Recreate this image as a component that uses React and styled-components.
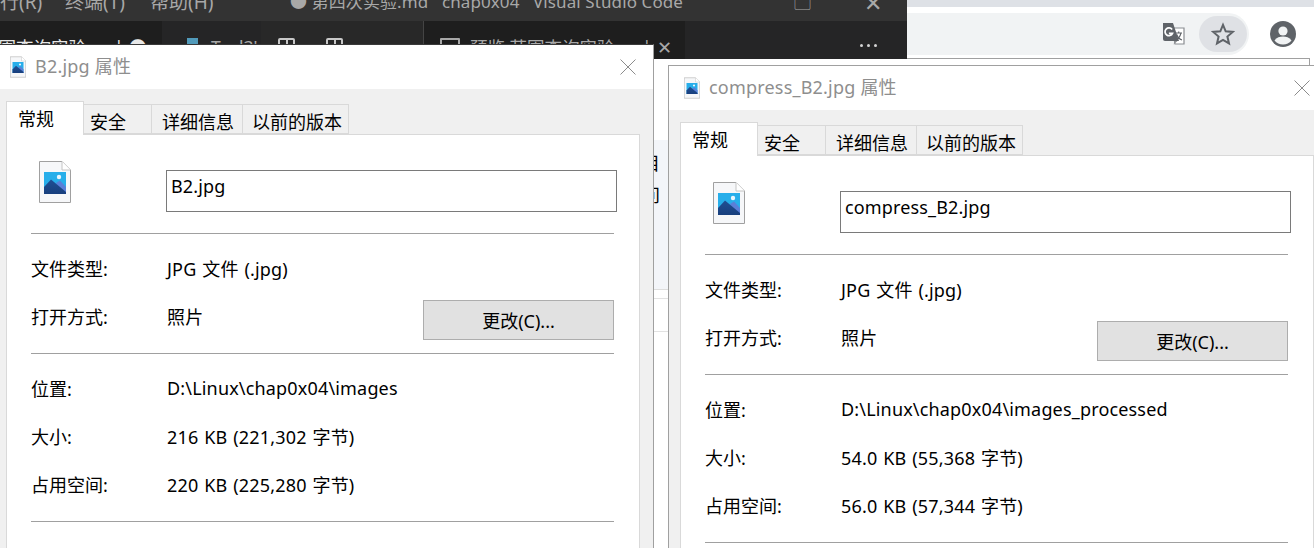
import React from 'react'
import styled, { createGlobalStyle } from 'styled-components'

const FONT = `"Noto Sans", "Noto Sans CJK SC", sans-serif`

const GlobalStyle = createGlobalStyle`
  html, body { margin: 0; padding: 0; background: #fff; }
  * { box-sizing: border-box; }
`

const Desktop = styled.div`
  position: relative;
  width: 1314px;
  height: 548px;
  overflow: hidden;
  font-family: ${FONT};
  font-size: 18px;
  color: #000;
`

/* browser behind everything */
const Browser = styled.div`
  display: flex;
  flex-direction: column;
  height: 100%;
`
const BrowserTabs = styled.div`
  height: 7px;
  background: #dee1e6;
`
const BrowserBar = styled.div`
  height: 51px;
  padding: 6px 18px 3px 0;
  display: flex;
  align-items: center;
  justify-content: space-between;
  background: #fff;
`
const Omnibox = styled.div`
  width: 1249px;
  height: 42px;
  padding-right: 2px;
  display: flex;
  align-items: center;
  justify-content: flex-end;
  gap: 13px;
  background: #f1f3f4;
  border-radius: 0 21px 21px 0;
`
const StarButton = styled.div`
  width: 48px;
  height: 36px;
  display: flex;
  align-items: center;
  justify-content: center;
  background: #dfe1e5;
  border-radius: 18px;
`
const BrowserPage = styled.div`
  flex: 1;
  padding-left: 654px;
  background: #fff;
`
const PageFrame = styled.div`
  margin-right: 4px;
  height: 100%;
  border-top: 1px solid #a0a0a0;
  border-right: 1px solid #a0a0a0;
  padding-top: 81px;
`
const Strip = styled.div`
  height: 150px;
  padding-top: 7px;
  background: #f3f5f9;
  border-bottom: 1px solid #dddddd;
`
const Clipped = styled.div`
  width: 6px;
  height: 32px;
  line-height: 32px;
  display: flex;
  justify-content: flex-end;
  overflow: hidden;
  white-space: nowrap;
`
const PageRule = styled.div`
  height: ${p => p.$h}px;
  border-bottom: 1px solid #e2e2e2;
`

/* vs code window */
const Code = styled.div`
  position: absolute;
  left: 0;
  top: 0;
  width: 907px;
  height: 59px;
  overflow: hidden;
  display: flex;
  flex-direction: column;
  color: #a8a8a8;
`
const CodeTitle = styled.div`
  height: 21px;
  flex: none;
  overflow: hidden;
  display: flex;
  background: #333333;
`
const TitleRun = styled.div`
  flex: none;
  width: ${p => p.$w}px;
  height: 24px;
  margin-top: -10px;
  line-height: 24px;
  font-size: ${p => p.$size || 17}px;
  letter-spacing: ${p => p.$track || 0}px;
  white-space: pre;
`
const CodeTabs = styled.div`
  flex: 1;
  display: flex;
  background: #252526;
`
const CodeTab = styled.div`
  flex: none;
  width: ${p => p.$w}px;
  padding: 14px 0 0 ${p => p.$pad || 0}px;
  display: flex;
  align-items: flex-start;
  gap: ${p => p.$gap || 0}px;
  background: ${p => p.$bg};
  border-left: ${p => (p.$line ? '1px solid #444' : 'none')};
  font-size: 17.5px;
  line-height: 24px;
  color: ${p => p.$color || '#a8a8a8'};
  white-space: nowrap;
  overflow: hidden;
`
const TabCaption = styled.span`
  flex: none;
  margin-left: ${p => p.$shift || 0}px;
  width: ${p => (p.$w ? `${p.$w}px` : 'auto')};
`
const SplitIcon = styled.div`
  flex: none;
  width: 17px;
  height: 18px;
  margin-top: 3px;
  border: 2px solid #c8c8c8;
  border-radius: 2px;
  background: linear-gradient(#c8c8c8, #c8c8c8) center / 2px 100% no-repeat;
`
const PreviewIcon = styled.div`
  flex: none;
  width: 20px;
  height: 20px;
  margin-top: 3px;
  border: 2px solid #a8a8a8;
  border-radius: 1px;
  background: linear-gradient(#a8a8a8, #a8a8a8) center 5px / 100% 2px no-repeat;
`
const Dots = styled.div`
  margin-left: auto;
  margin-right: 30px;
  margin-top: 23px;
  display: flex;
  gap: 4px;
`
const Dot = styled.i`
  width: 3px;
  height: 3px;
  border-radius: 50%;
  background: #d4d4d4;
`

/* property dialogs */
const Dialog = styled.div`
  position: absolute;
  left: ${p => p.$left}px;
  top: ${p => p.$top}px;
  width: 660px;
  height: 560px;
  display: flex;
  flex-direction: column;
  background: #f0f0f0;
  border: 1px solid #a0a0a0;
  border-top-color: ${p => p.$topLine};
  border-bottom: none;
`
const TitleBar = styled.div`
  height: 44px;
  flex: none;
  display: flex;
  align-items: center;
  padding: 0 17px 0 15px;
  gap: 9px;
  background: #fff;
  color: #8e8e8e;
`
const TitleText = styled.div`
  flex: 1;
  white-space: nowrap;
  margin-top: -4px;
  letter-spacing: 0.2px;
`
const Tabs = styled.div`
  height: 45px;
  flex: none;
  margin-left: 11px;
  padding-top: 12px;
  display: flex;
  align-items: flex-end;
`
const Tab = styled.div`
  width: ${p => p.$w}px;
  height: ${p => (p.$active ? 34 : 30)}px;
  margin-bottom: ${p => (p.$active ? -1 : 0)}px;
  padding-left: ${p => p.$pad}px;
  line-height: 34px;
  background: ${p => (p.$active ? '#fff' : '#f0f0f0')};
  border: 1px solid #d9d9d9;
  border-left-width: ${p => (p.$active ? 1 : 0)}px;
  border-bottom: ${p => (p.$active ? 'none' : '1px solid #d9d9d9')};
  position: relative;
  white-space: nowrap;
`
const Panel = styled.div`
  flex: 1;
  margin: 0 13px 0 11px;
  padding: 0 20px 0 24px;
  background: #fff;
  border: 1px solid #d9d9d9;
`
const NameRow = styled.div`
  height: 98px;
  padding-top: 35px;
  display: flex;
  align-items: flex-start;
`
const BigIcon = styled.div`
  width: 135px;
  flex: none;
  margin-top: -9px;
  padding-left: 8px;
`
const NameField = styled.div`
  width: 451px;
  flex: none;
  height: 42px;
  padding: 2px 4px;
  line-height: 26px;
  letter-spacing: 0.15px;
  border: 1px solid #7a7a7a;
  background: #fff;
`
const Rule = styled.div`
  height: 1px;
  width: 583px;
  background: #a0a0a0;
`
const Group = styled.div`
  width: 583px;
  padding: 11px 0 12px;
`
const Row = styled.div`
  height: 48px;
  padding-bottom: 2px;
  display: flex;
  align-items: center;
  white-space: nowrap;
`
const Label = styled.div`
  width: 136px;
  flex: none;
`
const Value = styled.div`
  flex: 1;
  letter-spacing: 0.17px;
  word-spacing: 1px;
`
const ChangeButton = styled.div`
  width: 191px;
  height: 40px;
  flex: none;
  margin-top: 8px;
  display: flex;
  align-items: center;
  justify-content: center;
  background: #e1e1e1;
  border: 1px solid #adadad;
`

function FileIcon({ w, h, id }) {
  return (
    <svg width={w} height={h} viewBox="0 0 32 42" style={{ display: 'block', flex: 'none' }}>
      <defs>
        <linearGradient id={id} x1="0" y1="0" x2="0" y2="1">
          <stop offset="0" stopColor="#1f4f94" />
          <stop offset="1" stopColor="#183f7d" />
        </linearGradient>
      </defs>
      <path d="M0.5 0.5H23L31.5 9V41.5H0.5Z" fill="#f6f7f9" stroke="#a0a0a0" />
      <path d="M23 0.5V9H31.5" fill="#fff" stroke="#c4c4c4" />
      <rect x="5" y="11" width="22" height="22" fill="#27aeea" />
      <circle cx="20" cy="16" r="2.2" fill="#e9f6fd" />
      <path d="M17 22L21 19.5L27 26V33H22Z" fill="#5a7fd8" />
      <path d="M5 26L12 18.5L27 31V33H5Z" fill={`url(#${id})`} />
    </svg>
  )
}

const CloseGlyph = () => (
  <svg width="16" height="16" viewBox="0 0 16 16" style={{ flex: 'none' }}>
    <path d="M0.5 0.5L15.5 15.5M15.5 0.5L0.5 15.5" stroke="#8c8c8c" strokeWidth="1" fill="none" />
  </svg>
)

const TABS = [
  { label: '常规', w: 78, pad: 11, active: true },
  { label: '安全', w: 68, pad: 6 },
  { label: '详细信息', w: 91, pad: 10 },
  { label: '以前的版本', w: 106, pad: 9 },
]

function PropertyDialog({ left, top, topLine, iconId, name, path, size, disk }) {
  return (
    <Dialog $left={left} $top={top} $topLine={topLine}>
      <TitleBar>
        <FileIcon w={16} h={22} id={iconId + 's'} />
        <TitleText>{name} 属性</TitleText>
        <CloseGlyph />
      </TitleBar>
      <Tabs>
        {TABS.map(t => (
          <Tab key={t.label} $w={t.w} $pad={t.pad} $active={t.active}>{t.label}</Tab>
        ))}
      </Tabs>
      <Panel>
        <NameRow>
          <BigIcon><FileIcon w={32} h={42} id={iconId} /></BigIcon>
          <NameField>{name}</NameField>
        </NameRow>
        <Rule />
        <Group>
          <Row><Label>文件类型:</Label><Value>JPG 文件 (.jpg)</Value></Row>
          <Row>
            <Label>打开方式:</Label>
            <Value>照片</Value>
            <ChangeButton>更改(C)...</ChangeButton>
          </Row>
        </Group>
        <Rule />
        <Group>
          <Row><Label>位置:</Label><Value>{path}</Value></Row>
          <Row><Label>大小:</Label><Value>{size}</Value></Row>
          <Row><Label>占用空间:</Label><Value>{disk}</Value></Row>
        </Group>
        <Rule />
      </Panel>
    </Dialog>
  )
}

export default function App() {
  return (
    <Desktop>
      <GlobalStyle />
      <Browser>
        <BrowserTabs />
        <BrowserBar>
          <Omnibox>
            <svg width="24" height="24" viewBox="0 0 24 24">
              <path d="M10 6H22V22H13Z" fill="#fff" stroke="#8a8d91" strokeWidth="1.2" />
              <path d="M1 1H11L17 19H3A2 2 0 0 1 1 17Z" fill="#5f6368" />
              <path d="M13 19L11.5 22.5L15.5 19Z" fill="#8a8d91" />
              <path d="M12.6 8.5A3.9 3.9 0 1 0 13 12.4H9.4" fill="none" stroke="#fff" strokeWidth="1.7" transform="translate(-2.5 -1)" />
              <path d="M13.5 11H20M16.7 9.5V11M19 11C18 15 15.5 17.5 13.5 18.5M14.8 12.5C15.5 15 17.5 17.2 20 18" fill="none" stroke="#5f6368" strokeWidth="1.1" />
            </svg>
            <StarButton>
              <svg width="24" height="24" viewBox="0 0 24 24">
                <path d="M12 2.8L14.7 9.3L21.8 9.9L16.4 14.5L18 21.4L12 17.8L6 21.4L7.6 14.5L2.2 9.9L9.3 9.3Z" fill="none" stroke="#5f6368" strokeWidth="2" strokeLinejoin="miter" />
              </svg>
            </StarButton>
          </Omnibox>
          <svg width="26" height="26" viewBox="0 0 26 26">
            <circle cx="13" cy="13" r="13" fill="#5f6368" />
            <circle cx="13" cy="10" r="4.6" fill="#f1f3f4" />
            <path d="M4.5 19.5C6.5 16.4 10 15.6 13 15.6S19.5 16.4 21.5 19.5A11 11 0 0 1 13 23.6A11 11 0 0 1 4.5 19.5Z" fill="#f1f3f4" />
          </svg>
        </BrowserBar>
        <BrowserPage>
          <PageFrame>
            <Strip>
              <Clipped>项目</Clipped>
              <Clipped>问</Clipped>
            </Strip>
            <PageRule $h={9} />
            <PageRule $h={33} />
          </PageFrame>
        </BrowserPage>
      </Browser>

      <Code>
        <CodeTitle>
          <TitleRun $w={65} $size={19}>行(R)</TitleRun>
          <TitleRun $w={85} $size={19}>终端(T)</TitleRun>
          <TitleRun $w={140} $size={19}>帮助(H)</TitleRun>
          <TitleRun $w={504} $track={0.1}>● 第四次实验.md   chap0x04   Visual Studio Code</TitleRun>
          <TitleRun $w={70}>▢</TitleRun>
          <TitleRun $w={41} $size={22}>✕</TitleRun>
        </CodeTitle>
        <CodeTabs>
          <CodeTab $w={162} $bg="#1e1e1e" $color="#e8e8e8">
            <TabCaption $shift={-19} $w={133}>范围查询实验</TabCaption>
            <TabCaption $w={15}>|</TabCaption>
            <TabCaption>●</TabCaption>
          </CodeTab>
          <CodeTab $w={99} $bg="#252526" $pad={25} $gap={13}>
            <svg width="11" height="14" viewBox="0 0 11 14" style={{ flex: 'none', marginTop: 3 }}>
              <path d="M0 0H11V14L5.5 8L0 14Z" fill="#519aba" />
            </svg>
            <TabCaption $w={15}>T</TabCaption>
            <TabCaption>l3'</TabCaption>
          </CodeTab>
          <CodeTab $w={162} $bg="#282828" $pad={17} $gap={31}>
            <SplitIcon />
            <SplitIcon />
          </CodeTab>
          <CodeTab $w={262} $bg="#1e1e1e" $line $pad={16} $gap={10}>
            <PreviewIcon />
            <TabCaption $w={162}>预览 范围查询实验</TabCaption>
            <TabCaption $w={5}>|</TabCaption>
            <TabCaption>✕</TabCaption>
          </CodeTab>
          <Dots><Dot /><Dot /><Dot /></Dots>
        </CodeTabs>
      </Code>

      <PropertyDialog
        left={-6}
        top={44}
        topLine="#3a3a3a"
        iconId="imgA"
        name="B2.jpg"
        path="D:\Linux\chap0x04\images"
        size="216 KB (221,302 字节)"
        disk="220 KB (225,280 字节)"
      />
      <PropertyDialog
        left={668}
        top={65}
        topLine="#a0a0a0"
        iconId="imgB"
        name="compress_B2.jpg"
        path="D:\Linux\chap0x04\images_processed"
        size="54.0 KB (55,368 字节)"
        disk="56.0 KB (57,344 字节)"
      />
    </Desktop>
  )
}
